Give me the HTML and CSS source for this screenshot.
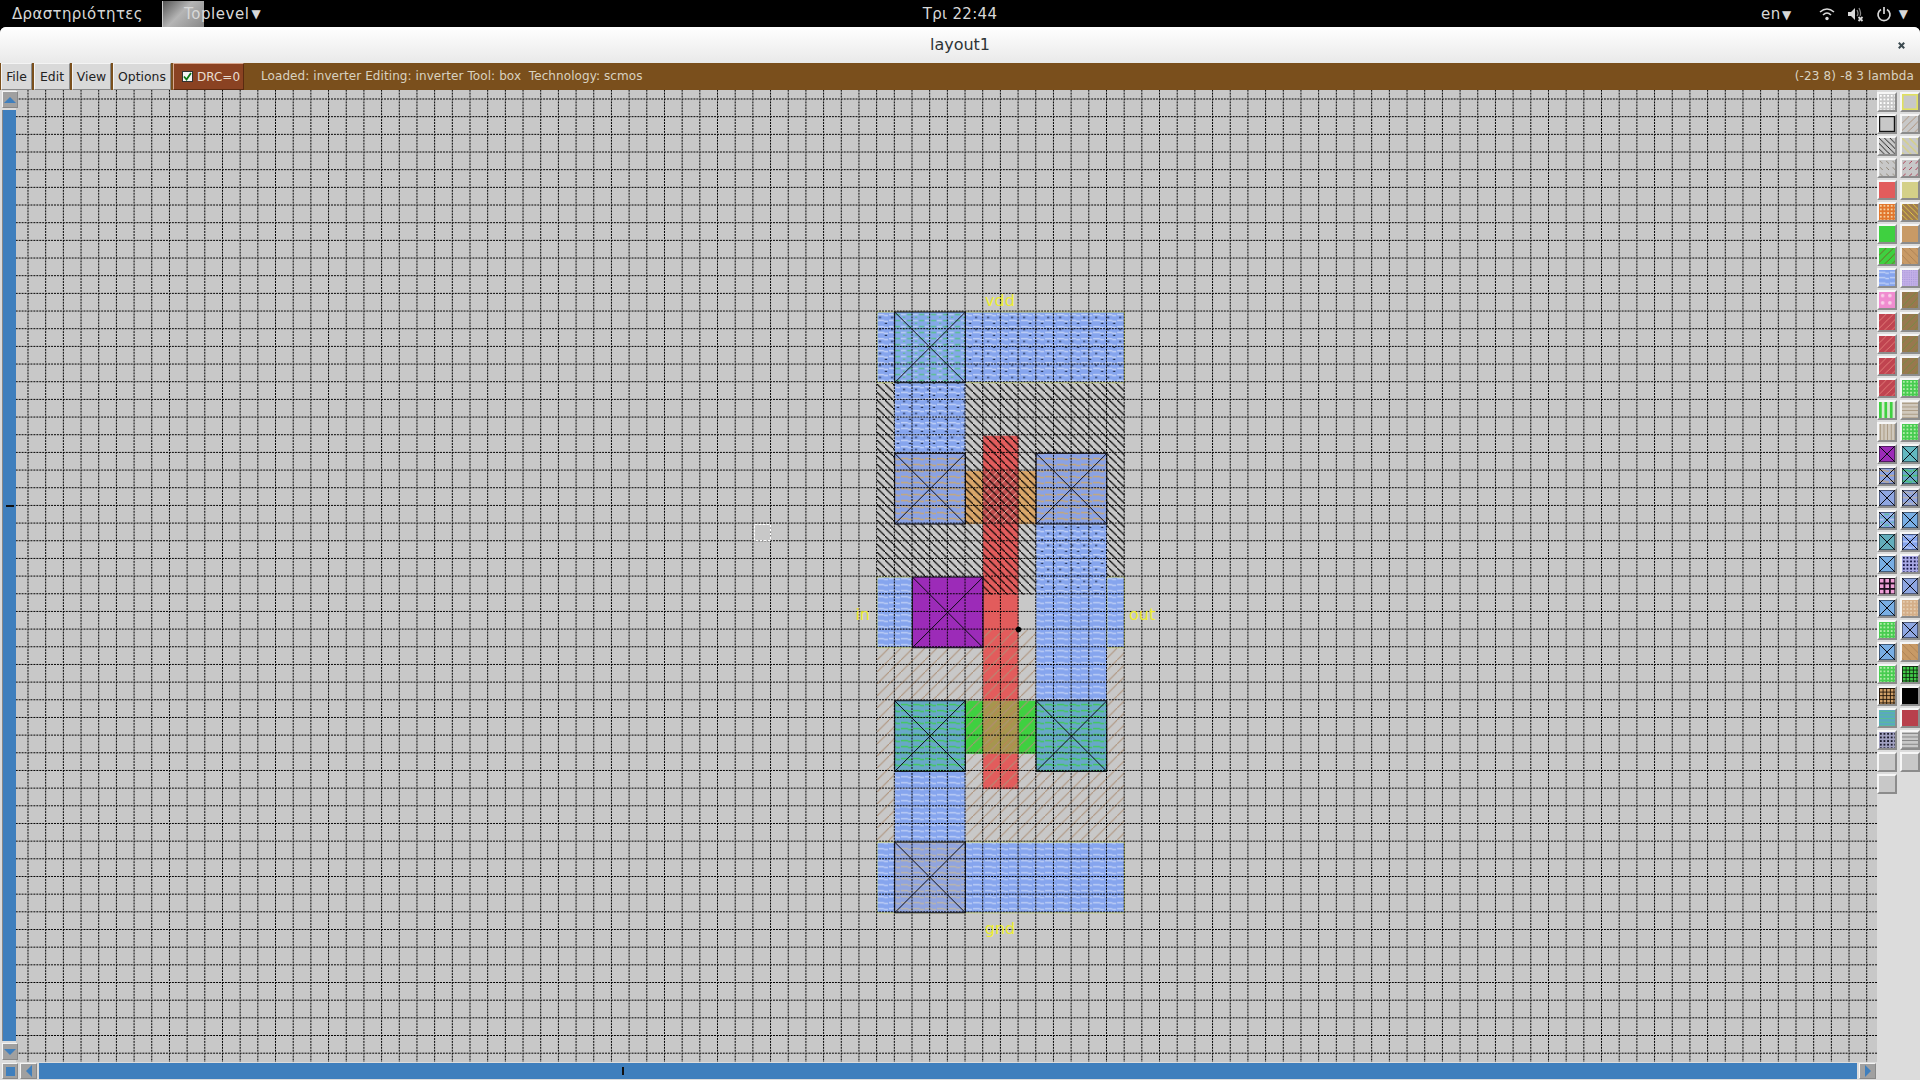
FILE: index.html
```html
<!DOCTYPE html>
<html lang="el">
<head>
  <meta charset="UTF-8" />
  <title>layout1</title>
  <link rel="stylesheet" href="styles.css">
</head>
<body>
  <!-- shared stipples, sized in screen px and scaled down to lambda units -->
  <svg class="defs" width="0" height="0">
    <defs>
      <pattern id="grid" patternUnits="userSpaceOnUse" x="27.5" y="98.5" width="17.68" height="17.67">
        <path d="M0 .5H17.68M.5 0V17.67" fill="none" stroke="#000" stroke-width="1" stroke-dasharray="2 1" shape-rendering="crispEdges"/>
      </pattern>
      <pattern id="nwell" patternUnits="userSpaceOnUse" width="8" height="8" patternTransform="scale(.0566)">
        <path d="M-1 -1L9 9" stroke="#000" stroke-width="1.1"/>
      </pattern>
      <pattern id="pwell" patternUnits="userSpaceOnUse" width="12" height="12" patternTransform="scale(.0566)">
        <path d="M13 -1L-1 13" stroke="#ad9077" stroke-width="1"/>
      </pattern>
      <pattern id="metal" patternUnits="userSpaceOnUse" width="12" height="6" patternTransform="scale(.0566)">
        <rect width="12" height="6" fill="#86a5ee"/>
        <path d="M0 2.500H7M7 3.500H11" stroke="#c3d2f6" stroke-width="1.300"/>
      </pattern>
      <pattern id="metal-dots" patternUnits="userSpaceOnUse" width="12" height="12" patternTransform="scale(.0566)">
        <rect width="12" height="12" fill="#86a5ee"/>
        <path d="M0 2.500H7M7 3.500H11M0 8.500H7M7 9.500H11" stroke="#c3d2f6" stroke-width="1.300"/>
        <path d="M2 5.500H4M8 11.500H10" stroke="#14203c" stroke-width="1.200"/>
      </pattern>
      <pattern id="ntap" patternUnits="userSpaceOnUse" width="12" height="6" patternTransform="scale(.0566)">
        <rect width="12" height="6" fill="#84a8e8"/>
        <path d="M0 2.500H5" stroke="#b8cdf2" stroke-width="1.500"/>
        <path d="M6 2.500H11M2 5.500H4" stroke="#5cc090" stroke-width="1.500"/>
      </pattern>
      <pattern id="pdc" patternUnits="userSpaceOnUse" width="12" height="6" patternTransform="scale(.0566)">
        <rect width="12" height="6" fill="#8aa2e4"/>
        <path d="M0 2.500H7M7 3.500H11" stroke="#c6a878" stroke-width="1.500"/>
      </pattern>
      <pattern id="ndc" patternUnits="userSpaceOnUse" width="12" height="6" patternTransform="scale(.0566)">
        <rect width="12" height="6" fill="#68a8c8"/>
        <path d="M0 2.500H7M7 3.500H11" stroke="#42c95c" stroke-width="1.500"/>
      </pattern>
      <pattern id="psc" patternUnits="userSpaceOnUse" width="12" height="6" patternTransform="scale(.0566)">
        <rect width="12" height="6" fill="#90a4de"/>
        <path d="M0 2.500H7M7 3.500H11" stroke="#bab4ac" stroke-width="1.500"/>
      </pattern>
      <pattern id="poly-p" patternUnits="userSpaceOnUse" width="8" height="8" patternTransform="scale(.0566)">
        <rect width="8" height="8" fill="#c25050"/>
        <path d="M9 -1L-1 9" stroke="#f0c0b0" stroke-width=".8"/>
      </pattern>
      <pattern id="poly-n" patternUnits="userSpaceOnUse" width="8" height="8" patternTransform="scale(.0566)">
        <rect width="8" height="8" fill="#a6964e"/>
        <path d="M9 -1L-1 9" stroke="#c47c5c" stroke-width=".8"/>
      </pattern>
      <pattern id="dots-light" patternUnits="userSpaceOnUse" width="4" height="4" patternTransform="scale(.0566)">
        <rect x="1" y="1" width="2" height="2" fill="#fff"/>
      </pattern>
      <pattern id="slash-tan" patternUnits="userSpaceOnUse" width="8" height="8" patternTransform="scale(.0566)">
        <path d="M9 -1L-1 9" stroke="#ad9077" stroke-width="1"/>
      </pattern>
      <pattern id="slash-black" patternUnits="userSpaceOnUse" width="6" height="6" patternTransform="scale(.0566)">
        <path d="M-1 -1L7 7" stroke="#111" stroke-width="1"/>
      </pattern>
      <pattern id="slash-yellow" patternUnits="userSpaceOnUse" width="8" height="8" patternTransform="scale(.0566)">
        <path d="M-1 -1L9 9" stroke="#d8d27a" stroke-width="1.400"/>
      </pattern>
      <pattern id="dash-grey" patternUnits="userSpaceOnUse" width="7" height="7" patternTransform="scale(.0566)">
        <path d="M1 1L4 4" stroke="#8c8272" stroke-width="1"/>
      </pattern>
      <pattern id="dash-red" patternUnits="userSpaceOnUse" width="7" height="7" patternTransform="scale(.0566)">
        <path d="M4 1L1 4" stroke="#a83048" stroke-width="1"/>
      </pattern>
      <pattern id="orange-dots" patternUnits="userSpaceOnUse" width="4" height="4" patternTransform="scale(.0566)">
        <rect width="4" height="4" fill="#e2762c"/>
        <rect x="1" y="1" width="2" height="2" fill="#f4cfa0"/>
      </pattern>
      <pattern id="brown-yellow" patternUnits="userSpaceOnUse" width="6" height="6" patternTransform="scale(.0566)">
        <rect width="6" height="6" fill="#a07c50"/>
        <path d="M-1 -1L7 7" stroke="#e8d040" stroke-width="1"/>
      </pattern>
      <pattern id="green-red" patternUnits="userSpaceOnUse" width="8" height="8" patternTransform="scale(.0566)">
        <rect width="8" height="8" fill="#3fd040"/>
        <path d="M9 -1L-1 9" stroke="#7c5020" stroke-width=".9"/>
      </pattern>
      <pattern id="tan-slash" patternUnits="userSpaceOnUse" width="8" height="8" patternTransform="scale(.0566)">
        <rect width="8" height="8" fill="#c89a66"/>
        <path d="M-1 -1L9 9" stroke="#a87c50" stroke-width=".9"/>
      </pattern>
      <pattern id="lilac" patternUnits="userSpaceOnUse" width="2" height="2" patternTransform="scale(.0566)">
        <rect width="2" height="2" fill="#c4b0e8"/>
        <rect width="1" height="1" fill="#a898d8"/>
      </pattern>
      <pattern id="pink" patternUnits="userSpaceOnUse" width="8" height="8" patternTransform="scale(.0566)">
        <rect width="8" height="8" fill="#f08cd0"/>
        <circle cx="4" cy="4" r="2" fill="#f8d0e8"/>
      </pattern>
      <pattern id="brown-green" patternUnits="userSpaceOnUse" width="8" height="8" patternTransform="scale(.0566)">
        <rect width="8" height="8" fill="#98784e"/>
        <path d="M9 -1L-1 9" stroke="#6c9040" stroke-width=".9"/>
      </pattern>
      <pattern id="red-slash" patternUnits="userSpaceOnUse" width="8" height="8" patternTransform="scale(.0566)">
        <rect width="8" height="8" fill="#c04450"/>
        <path d="M9 -1L-1 9" stroke="#e88880" stroke-width=".9"/>
      </pattern>
      <pattern id="green-dots" patternUnits="userSpaceOnUse" width="4" height="4" patternTransform="scale(.0566)">
        <rect width="4" height="4" fill="#48cc50"/>
        <rect x="1" y="1" width="2" height="2" fill="#b0eca8"/>
      </pattern>
      <pattern id="green-stripes" patternUnits="userSpaceOnUse" width="6" height="6" patternTransform="scale(.0566)">
        <rect width="6" height="6" fill="#d8e8d0"/>
        <rect width="3" height="6" fill="#3fd040"/>
      </pattern>
      <pattern id="tan-lines-h" patternUnits="userSpaceOnUse" width="4" height="4" patternTransform="scale(.0566)">
        <rect width="4" height="4" fill="#d0c8bc"/>
        <rect y="1" width="4" height="1" fill="#a89880"/>
      </pattern>
      <pattern id="tan-lines-v" patternUnits="userSpaceOnUse" width="4" height="4" patternTransform="scale(.0566)">
        <rect width="4" height="4" fill="#d0c8bc"/>
        <rect x="1" width="1" height="4" fill="#a89880"/>
      </pattern>
      <pattern id="tan-dots" patternUnits="userSpaceOnUse" width="4" height="4" patternTransform="scale(.0566)">
        <rect width="4" height="4" fill="#d4ae88"/>
        <rect x="1" y="1" width="2" height="2" fill="#e4ccb0"/>
      </pattern>
      <pattern id="blue-black" patternUnits="userSpaceOnUse" width="4" height="4" patternTransform="scale(.0566)">
        <rect width="4" height="4" fill="#a8a8e4"/>
        <rect x="1" y="1" width="2" height="2" fill="#181848"/>
      </pattern>
      <pattern id="pink-black" patternUnits="userSpaceOnUse" width="6" height="6" patternTransform="scale(.0566)">
        <rect width="6" height="6" fill="#201020"/>
        <rect x="1" y="1" width="4" height="4" fill="#f0a0d8"/>
      </pattern>
      <pattern id="green-black" patternUnits="userSpaceOnUse" width="4" height="4" patternTransform="scale(.0566)">
        <rect width="4" height="4" fill="#102810"/>
        <rect x="1" y="1" width="3" height="3" fill="#40cc48"/>
      </pattern>
      <pattern id="tan-black" patternUnits="userSpaceOnUse" width="4" height="4" patternTransform="scale(.0566)">
        <rect width="4" height="4" fill="#201408"/>
        <rect x="1" y="1" width="3" height="3" fill="#d0a068"/>
      </pattern>
      <pattern id="teal-waves" patternUnits="userSpaceOnUse" width="6" height="4" patternTransform="scale(.0566)">
        <rect width="6" height="4" fill="#5aa8c0"/>
        <rect y="1" width="6" height="1" fill="#58c090"/>
      </pattern>
      <pattern id="grey-black" patternUnits="userSpaceOnUse" width="4" height="4" patternTransform="scale(.0566)">
        <rect width="4" height="4" fill="#a0a0c0"/>
        <rect x="1" y="1" width="2" height="2" fill="#181828"/>
      </pattern>
      <pattern id="grey-lines" patternUnits="userSpaceOnUse" width="4" height="4" patternTransform="scale(.0566)">
        <rect width="4" height="4" fill="#c8c8c8"/>
        <rect y="1" width="4" height="1" fill="#808080"/>
      </pattern>
      <path id="x" d="M0 0H1V1H0ZM0 0L1 1M1 0L0 1" fill="none" stroke="#0c0c14" stroke-width="1" vector-effect="non-scaling-stroke"/>
    </defs>
  </svg>

  <div class="topbar">
    <div class="activities">Δραστηριότητες</div>
    <div class="app-menu"><span class="app-icon"></span><span class="app-name">Toplevel</span><span class="caret">▼</span></div>
    <div class="clock">Τρι 22:44</div>
    <div class="tray">
      <span class="lang">en<span class="caret">▼</span></span>
      <svg class="tray-icon" width="16" height="16" viewBox="0 0 16 16"><path d="M1 6Q8 0 15 6M4 9Q8 5 12 9" fill="none" stroke="#d8d8d8" stroke-width="1.6"/><circle cx="8" cy="12.5" r="1.7" fill="#d8d8d8"/></svg>
      <svg class="tray-icon" width="17" height="16" viewBox="0 0 17 16"><path d="M1 6H4L8 2V14L4 10H1Z" fill="#d8d8d8"/><path d="M10 4Q12 8 10 10M12 2Q14.500 7 13 10" fill="none" stroke="#888" stroke-width="1.2"/><path d="M11.500 11L15.500 15M15.500 11L11.500 15" stroke="#d8d8d8" stroke-width="1.8"/></svg>
      <svg class="tray-icon tray-power" width="16" height="16" viewBox="0 0 16 16"><path d="M5 3.500A6 6 0 1 0 11 3.500" fill="none" stroke="#d8d8d8" stroke-width="1.7"/><path d="M8 1V8" stroke="#d8d8d8" stroke-width="1.7"/></svg>
      <span class="caret">▼</span>
    </div>
  </div>

  <div class="window">
    <div class="titlebar">
      <span class="title">layout1</span>
      <svg class="close" width="7" height="7" viewBox="0 0 9 9"><path d="M1 1L8 8M8 1L1 8" stroke="#3c4a50" stroke-width="2.6"/></svg>
    </div>

    <div class="toolbar">
      <button class="menu-btn btn-file">File</button>
      <button class="menu-btn btn-edit">Edit</button>
      <button class="menu-btn btn-view">View</button>
      <button class="menu-btn btn-options">Options</button>
      <button class="drc-btn"><span class="check"><svg width="9" height="9" viewBox="0 0 9 9"><path d="M1 4.500L3.500 7.500L8 1" fill="none" stroke="#0a7a14" stroke-width="1.8"/></svg></span>DRC=0</button>
      <span class="status">Loaded: inverter Editing: inverter Tool: box&nbsp; Technology: scmos</span>
      <span class="coords">(-23 8) -8 3 lambda</span>
    </div>

    <div class="workspace">
      <div class="vscroll">
        <div class="arrow-btn"><span class="tri up"></span></div>
        <div class="v-trough"><span class="v-mark"></span></div>
        <div class="arrow-btn"><span class="tri down"></span></div>
      </div>

      <svg class="canvas" width="1861" height="972" viewBox="16 90 1861 972">
        <g transform="translate(877 312) scale(17.68 17.67)">
          <rect x="5" y="9" width="4" height="3" fill="#d9a669"/>
          <rect x="5" y="22" width="4" height="3" fill="#3fd040"/>
          <rect x="6" y="7" width="2" height="20" fill="#e25c5c"/>
          <rect x="6" y="9" width="2" height="3" fill="url(#poly-p)"/>
          <rect x="6" y="22" width="2" height="3" fill="url(#poly-n)"/>
          <rect x="0" y="4" width="14" height="12" fill="url(#nwell)"/>
          <rect x="0" y="18" width="14" height="12" fill="url(#pwell)"/>

          <rect x="0" y="0" width="14" height="4" fill="url(#metal-dots)"/>
          <rect x="1" y="4" width="4" height="4" fill="url(#metal-dots)"/>
          <rect x="0" y="15" width="2" height="4" fill="url(#metal)"/>
          <rect x="13" y="15" width="1" height="4" fill="url(#metal)"/>
          <rect x="9" y="12" width="4" height="4" fill="url(#metal-dots)"/>
          <rect x="9" y="16" width="4" height="6" fill="url(#metal)"/>
          <rect x="1" y="26" width="4" height="4" fill="url(#metal)"/>
          <rect x="0" y="30" width="14" height="4" fill="url(#metal)"/>
          <path d="M0 0H14V4H0ZM0 30H14V34H0ZM0 15H2V19H0ZM13 15H14V19H13Z" fill="none" stroke="#dcdc50" stroke-width="1" stroke-opacity=".7" vector-effect="non-scaling-stroke"/>

          <g>
            <rect x="1" y="0" width="4" height="4" fill="url(#ntap)"/>
            <rect x="1" y="8" width="4" height="4" fill="url(#pdc)"/>
            <rect x="9" y="8" width="4" height="4" fill="url(#pdc)"/>
            <rect x="2" y="15" width="4" height="4" fill="#9c2bb8"/>
            <rect x="1" y="22" width="4" height="4" fill="url(#ndc)"/>
            <rect x="9" y="22" width="4" height="4" fill="url(#ndc)"/>
            <rect x="1" y="30" width="4" height="4" fill="url(#psc)"/>
          </g>
          <use href="#x" transform="translate(1 0) scale(4)"/>
          <use href="#x" transform="translate(1 8) scale(4)"/>
          <use href="#x" transform="translate(9 8) scale(4)"/>
          <use href="#x" transform="translate(2 15) scale(4)"/>
          <use href="#x" transform="translate(1 22) scale(4)"/>
          <use href="#x" transform="translate(9 22) scale(4)"/>
          <use href="#x" transform="translate(1 30) scale(4)"/>
        </g>
        <rect x="16" y="90" width="1861" height="972" fill="url(#grid)"/>
        <rect x="754.500" y="524.500" width="16" height="16" class="cursor-box"/>
        <circle cx="1018.500" cy="629.500" r="2.800" fill="#000"/>
        <g class="labels">
          <text x="1000" y="306" text-anchor="middle">vdd</text>
          <text x="1000" y="934" text-anchor="middle">gnd</text>
          <text x="870" y="620" text-anchor="end">in</text>
          <text x="1129" y="620">out</text>
        </g>
      </svg>

      <div class="palette">
        <span class="swatch"><svg viewBox="0 0 1 1"><rect width="1" height="1" fill="#c8c8c8"/><rect width="1" height="1" fill="url(#dots-light)"/></svg></span>
        <span class="swatch"><svg viewBox="0 0 1 1"><rect width="1" height="1" fill="#c8c8c8" stroke="#e0e060" stroke-width=".2"/></svg></span>
        <span class="swatch"><svg viewBox="0 0 1 1"><rect width="1" height="1" fill="#c8c8c8" stroke="#111" stroke-width=".15"/></svg></span>
        <span class="swatch"><svg viewBox="0 0 1 1"><rect width="1" height="1" fill="#c8c8c8"/><rect width="1" height="1" fill="url(#slash-tan)"/></svg></span>
        <span class="swatch"><svg viewBox="0 0 1 1"><rect width="1" height="1" fill="#c8c8c8"/><rect width="1" height="1" fill="url(#slash-black)"/></svg></span>
        <span class="swatch"><svg viewBox="0 0 1 1"><rect width="1" height="1" fill="#c8c8c8"/><rect width="1" height="1" fill="url(#slash-yellow)"/></svg></span>
        <span class="swatch"><svg viewBox="0 0 1 1"><rect width="1" height="1" fill="#c8c8c8"/><rect width="1" height="1" fill="url(#dash-grey)"/></svg></span>
        <span class="swatch"><svg viewBox="0 0 1 1"><rect width="1" height="1" fill="#c8c8c8"/><rect width="1" height="1" fill="url(#dash-red)"/></svg></span>
        <span class="swatch"><svg viewBox="0 0 1 1"><rect width="1" height="1" fill="#e25c5c"/></svg></span>
        <span class="swatch"><svg viewBox="0 0 1 1"><rect width="1" height="1" fill="#d4d088"/></svg></span>
        <span class="swatch"><svg viewBox="0 0 1 1"><rect width="1" height="1" fill="url(#orange-dots)"/></svg></span>
        <span class="swatch"><svg viewBox="0 0 1 1"><rect width="1" height="1" fill="url(#brown-yellow)"/></svg></span>
        <span class="swatch"><svg viewBox="0 0 1 1"><rect width="1" height="1" fill="#3fd040"/></svg></span>
        <span class="swatch"><svg viewBox="0 0 1 1"><rect width="1" height="1" fill="#c89a66"/></svg></span>
        <span class="swatch"><svg viewBox="0 0 1 1"><rect width="1" height="1" fill="url(#green-red)"/></svg></span>
        <span class="swatch"><svg viewBox="0 0 1 1"><rect width="1" height="1" fill="url(#tan-slash)"/></svg></span>
        <span class="swatch"><svg viewBox="0 0 1 1"><rect width="1" height="1" fill="url(#metal)"/></svg></span>
        <span class="swatch"><svg viewBox="0 0 1 1"><rect width="1" height="1" fill="url(#lilac)"/></svg></span>
        <span class="swatch"><svg viewBox="0 0 1 1"><rect width="1" height="1" fill="url(#pink)"/></svg></span>
        <span class="swatch"><svg viewBox="0 0 1 1"><rect width="1" height="1" fill="url(#brown-green)"/></svg></span>
        <span class="swatch"><svg viewBox="0 0 1 1"><rect width="1" height="1" fill="url(#red-slash)"/></svg></span>
        <span class="swatch"><svg viewBox="0 0 1 1"><rect width="1" height="1" fill="url(#brown-green)"/></svg></span>
        <span class="swatch"><svg viewBox="0 0 1 1"><rect width="1" height="1" fill="url(#red-slash)"/></svg></span>
        <span class="swatch"><svg viewBox="0 0 1 1"><rect width="1" height="1" fill="url(#brown-green)"/></svg></span>
        <span class="swatch"><svg viewBox="0 0 1 1"><rect width="1" height="1" fill="url(#red-slash)"/></svg></span>
        <span class="swatch"><svg viewBox="0 0 1 1"><rect width="1" height="1" fill="url(#brown-green)"/></svg></span>
        <span class="swatch"><svg viewBox="0 0 1 1"><rect width="1" height="1" fill="url(#red-slash)"/></svg></span>
        <span class="swatch"><svg viewBox="0 0 1 1"><rect width="1" height="1" fill="url(#green-dots)"/></svg></span>
        <span class="swatch"><svg viewBox="0 0 1 1"><rect width="1" height="1" fill="url(#green-stripes)"/></svg></span>
        <span class="swatch"><svg viewBox="0 0 1 1"><rect width="1" height="1" fill="url(#tan-lines-h)"/></svg></span>
        <span class="swatch"><svg viewBox="0 0 1 1"><rect width="1" height="1" fill="url(#tan-lines-v)"/></svg></span>
        <span class="swatch"><svg viewBox="0 0 1 1"><rect width="1" height="1" fill="url(#green-dots)"/></svg></span>
        <span class="swatch"><svg viewBox="0 0 1 1"><rect width="1" height="1" fill="#9c2bb8"/><use href="#x"/></svg></span>
        <span class="swatch"><svg viewBox="0 0 1 1"><rect width="1" height="1" fill="#62b8c0"/><use href="#x"/></svg></span>
        <span class="swatch"><svg viewBox="0 0 1 1"><rect width="1" height="1" fill="url(#pdc)"/><use href="#x"/></svg></span>
        <span class="swatch"><svg viewBox="0 0 1 1"><rect width="1" height="1" fill="url(#ndc)"/><use href="#x"/></svg></span>
        <span class="swatch"><svg viewBox="0 0 1 1"><rect width="1" height="1" fill="#8ea6e2"/><use href="#x"/></svg></span>
        <span class="swatch"><svg viewBox="0 0 1 1"><rect width="1" height="1" fill="url(#psc)"/><use href="#x"/></svg></span>
        <span class="swatch"><svg viewBox="0 0 1 1"><rect width="1" height="1" fill="url(#ntap)"/><use href="#x"/></svg></span>
        <span class="swatch"><svg viewBox="0 0 1 1"><rect width="1" height="1" fill="#78aee4"/><use href="#x"/></svg></span>
        <span class="swatch"><svg viewBox="0 0 1 1"><rect width="1" height="1" fill="#62aebc"/><use href="#x"/></svg></span>
        <span class="swatch"><svg viewBox="0 0 1 1"><rect width="1" height="1" fill="url(#metal)"/><use href="#x"/></svg></span>
        <span class="swatch"><svg viewBox="0 0 1 1"><rect width="1" height="1" fill="#78aee4"/><use href="#x"/></svg></span>
        <span class="swatch"><svg viewBox="0 0 1 1"><rect width="1" height="1" fill="url(#blue-black)"/></svg></span>
        <span class="swatch"><svg viewBox="0 0 1 1"><rect width="1" height="1" fill="url(#pink-black)"/></svg></span>
        <span class="swatch"><svg viewBox="0 0 1 1"><rect width="1" height="1" fill="#8ea6e2"/><use href="#x"/></svg></span>
        <span class="swatch"><svg viewBox="0 0 1 1"><rect width="1" height="1" fill="#78aee4"/><use href="#x"/></svg></span>
        <span class="swatch"><svg viewBox="0 0 1 1"><rect width="1" height="1" fill="url(#tan-dots)"/></svg></span>
        <span class="swatch"><svg viewBox="0 0 1 1"><rect width="1" height="1" fill="url(#green-dots)"/></svg></span>
        <span class="swatch"><svg viewBox="0 0 1 1"><rect width="1" height="1" fill="#8ea6e2"/><use href="#x"/></svg></span>
        <span class="swatch"><svg viewBox="0 0 1 1"><rect width="1" height="1" fill="#78aee4"/><use href="#x"/></svg></span>
        <span class="swatch"><svg viewBox="0 0 1 1"><rect width="1" height="1" fill="url(#tan-slash)"/></svg></span>
        <span class="swatch"><svg viewBox="0 0 1 1"><rect width="1" height="1" fill="url(#green-dots)"/></svg></span>
        <span class="swatch"><svg viewBox="0 0 1 1"><rect width="1" height="1" fill="url(#green-black)"/></svg></span>
        <span class="swatch"><svg viewBox="0 0 1 1"><rect width="1" height="1" fill="url(#tan-black)"/></svg></span>
        <span class="swatch"><svg viewBox="0 0 1 1"><rect width="1" height="1" fill="#000"/></svg></span>
        <span class="swatch"><svg viewBox="0 0 1 1"><rect width="1" height="1" fill="url(#teal-waves)"/></svg></span>
        <span class="swatch"><svg viewBox="0 0 1 1"><rect width="1" height="1" fill="#b8404c"/></svg></span>
        <span class="swatch"><svg viewBox="0 0 1 1"><rect width="1" height="1" fill="url(#grey-black)"/></svg></span>
        <span class="swatch"><svg viewBox="0 0 1 1"><rect width="1" height="1" fill="url(#grey-lines)"/></svg></span>
        <span class="swatch"></span>
        <span class="swatch"></span>
        <span class="swatch"></span>
      </div>
    </div>

    <div class="hscroll">
      <div class="arrow-btn corner"><span class="tri dot"></span></div>
      <div class="arrow-btn"><span class="tri left"></span></div>
      <div class="h-trough"><span class="h-mark"></span></div>
      <div class="arrow-btn"><span class="tri right"></span></div>
    </div>
  </div>
</body>
</html>
```

FILE: styles.css
```css
* {
  box-sizing: border-box;
}

body {
  margin: 0;
  height: 1080px;
  overflow: hidden;
  background-color: #000;
  font-family: 'DejaVu Sans', sans-serif;
  display: flex;
  flex-direction: column;
}

.defs {
  display: block;
  height: 0;
}

/* gnome shell bar */
.topbar {
  height: 27px;
  flex: none;
  display: flex;
  align-items: center;
  background-color: #000;
  color: #d8d8d8;
  font-size: 15px;
  position: relative;
}

.activities {
  margin-left: 12px;
  width: 150px;
  letter-spacing: 0.35px;
}

.app-menu {
  display: flex;
  align-items: center;
  height: 27px;
}

.app-icon {
  width: 42px;
  height: 26px;
  background: linear-gradient(135deg, #555 0%, #b5b5b5 45%, #888 100%);
  border-left: 1px solid #ccc;
}

.app-name {
  margin-left: -20px;
  letter-spacing: 0.55px;
}

.caret {
  font-size: 12px;
  margin-left: 1px;
}

.app-menu .caret {
  margin-left: 2px;
}

.clock {
  position: absolute;
  left: 0;
  right: 0;
  text-align: center;
  font-size: 15px;
  letter-spacing: 0.3px;
}

.tray {
  margin-left: auto;
  display: flex;
  align-items: center;
  padding-right: 12px;
  position: relative;
}

.lang {
  margin-right: 27px;
  letter-spacing: 0.6px;
}

.tray-icon {
  margin-right: 12px;
}

.tray-power {
  margin-right: 6px;
}

/* window */
.window {
  flex: 1;
  display: flex;
  flex-direction: column;
  background-color: #dcdcdc;
  border-radius: 6px 6px 0 0;
  min-height: 0;
}

.titlebar {
  height: 36px;
  flex: none;
  display: flex;
  align-items: center;
  justify-content: center;
  position: relative;
  background: linear-gradient(#ffffff, #e9e9e9);
  border-radius: 6px 6px 0 0;
  padding-bottom: 1px;
}

.title {
  font-size: 16px;
  color: #2e3436;
}

.close {
  position: absolute;
  right: 15px;
  top: 15px;
}

/* tk toolbar */
.toolbar {
  height: 27px;
  flex: none;
  display: flex;
  align-items: stretch;
  background-color: #7a4f1c;
  font-size: 12px;
}

.menu-btn {
  font: inherit;
  font-size: 12.4px;
  color: #222;
  background-color: #d9d9d9;
  padding: 0;
  border: 1px solid;
  border-color: #f4f4f4 #8a8a8a #8a8a8a #f4f4f4;
  margin-left: 2px;
}

.btn-file {
  width: 31px;
  margin-left: 1px;
}

.btn-edit {
  width: 36px;
}

.btn-view {
  width: 39px;
}

.btn-options {
  width: 58px;
}

.drc-btn {
  width: 71px;
  margin-left: 2px;
  font: inherit;
  color: #e8dcd0;
  background-color: #8a4222;
  display: flex;
  align-items: center;
  padding: 0 0 0 8px;
  border: 1px solid;
  border-color: #d8a890 #5a2a10 #5a2a10 #d8a890;
}

.check {
  width: 11px;
  height: 11px;
  margin-right: 4px;
  background-color: #f4f4f4;
  border: 1px solid #333;
  display: flex;
  align-items: center;
  justify-content: center;
}

.status {
  margin-left: 17px;
  color: #d9d2c0;
  line-height: 27px;
  letter-spacing: 0.08px;
}

.coords {
  margin-left: auto;
  margin-right: 6px;
  color: #d9d2c0;
  line-height: 27px;
  letter-spacing: 0.15px;
}

.workspace {
  height: 972px;
  flex: none;
  display: flex;
}

.canvas {
  display: block;
  flex: none;
  background-color: #c8c8c8;
}

.cursor-box {
  fill: none;
  stroke: #fff;
  stroke-dasharray: 3 1;
}

.labels text {
  font-family: 'DejaVu Sans', sans-serif;
  font-size: 16px;
  fill: #eeee30;
}

/* scrollbars */
.vscroll {
  width: 16px;
  flex: none;
  display: flex;
  flex-direction: column;
  padding: 1px 0 2px 2px;
  gap: 2px;
}

.v-trough {
  flex: 1;
  background-color: #3f7fbd;
  border-left: 1px solid #888;
  display: flex;
  justify-content: center;
  padding-top: 395px;
}

.v-mark {
  width: 8px;
  height: 2px;
  background-color: #111;
}

.arrow-btn {
  flex: none;
  width: 16px;
  height: 17px;
  background-color: #a0a0a0;
  border: 1px solid;
  border-color: #f4f4f4 #888 #888 #f4f4f4;
  display: flex;
  align-items: center;
  justify-content: center;
  position: relative;
  z-index: 1;
}

.tri {
  width: 0;
  height: 0;
  border: 6px solid transparent;
}

.tri.up {
  border-bottom-color: #3f7fbd;
  border-top-width: 0;
}

.tri.down {
  border-top-color: #3f7fbd;
  border-bottom-width: 0;
}

.tri.left {
  border-right-color: #3f7fbd;
  border-left-width: 0;
}

.tri.right {
  border-left-color: #3f7fbd;
  border-right-width: 0;
}

.tri.dot {
  border: 0;
  width: 9px;
  height: 9px;
  background-color: #3f7fbd;
}

.hscroll {
  flex: 1;
  display: flex;
  align-items: flex-start;
  gap: 2px;
  padding: 1px 44px 0 2px;
}

.hscroll .arrow-btn {
  width: 17px;
  height: 16px;
}

.hscroll .corner {
  width: 16px;
}

.h-trough {
  flex: 1;
  height: 16px;
  background-color: #3f7fbd;
  display: flex;
  align-items: center;
  padding-left: 583px;
}

.h-mark {
  width: 2px;
  height: 8px;
  background-color: #111;
}

/* layer palette */
.palette {
  flex: none;
  width: 43px;
  padding-top: 2px;
  display: grid;
  grid-template-columns: 20px 20px;
  grid-auto-rows: 20px;
  column-gap: 3px;
  row-gap: 2px;
  align-content: start;
}

.swatch {
  display: block;
  background-color: #c8c8c8;
  border: 2px solid;
  border-color: #f6f6f6 #8c8c8c #8c8c8c #f6f6f6;
}

.swatch svg {
  display: block;
  width: 16px;
  height: 16px;
}
```
